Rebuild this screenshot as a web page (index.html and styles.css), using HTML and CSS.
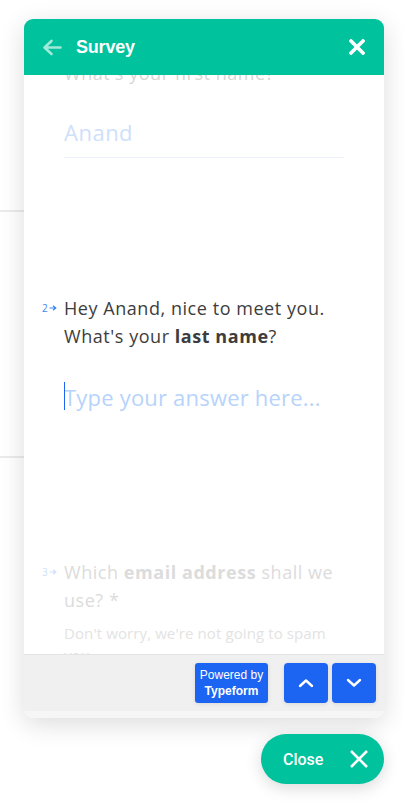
FILE: index.html
```html
<!DOCTYPE html>
<html>
<head>
<meta charset="utf-8">
<link rel="stylesheet" href="styles.css">
</head>
<body>
<div class="backdrop">
  <div class="rule"></div>
  <div class="rule second"></div>
</div>

<div class="widget">
  <header class="head">
    <svg class="back" width="20" height="17" viewBox="0 0 20 17"><path d="M18.5 8.5H3M9.5 2L2.5 8.5L9.5 15" fill="none" stroke="#a3e9d9" stroke-width="2.6" stroke-linecap="round" stroke-linejoin="round"/></svg>
    <span class="title">Survey</span>
    <svg class="x" width="16" height="16" viewBox="0 0 16 16"><path d="M2 2L14 14M14 2L2 14" fill="none" stroke="#fff" stroke-width="3.6" stroke-linecap="square"/></svg>
  </header>

  <div class="body">
    <div class="q q1">What's your first name?</div>
    <div class="answer">Anand</div>

    <div class="q q2">
      <span class="num">2<svg width="8" height="6" viewBox="0 0 8 6"><path d="M0.5 3H6.5M4 0.8L6.8 3L4 5.2" fill="none" stroke="currentColor" stroke-width="1.2"/></svg></span>
      Hey Anand, nice to meet you. What's your <b>last name</b>?
    </div>
    <div class="input"><span class="caret"></span>Type your answer here...</div>

    <div class="q q3">
      <span class="num">3<svg width="8" height="6" viewBox="0 0 8 6"><path d="M0.5 3H6.5M4 0.8L6.8 3L4 5.2" fill="none" stroke="currentColor" stroke-width="1.2"/></svg></span>
      Which <b>email address</b> shall we use? *
    </div>
    <div class="help">Don't worry, we're not going to spam you.</div>
  </div>

  <footer class="foot">
    <div class="powered"><span>Powered by</span><b>Typeform</b></div>
    <div class="navs">
      <div class="nav"><svg width="16" height="10" viewBox="0 0 16 10"><path d="M2 8L8 2.5L14 8" fill="none" stroke="#fff" stroke-width="2.4" stroke-linecap="round" stroke-linejoin="round"/></svg></div>
      <div class="nav"><svg width="16" height="10" viewBox="0 0 16 10"><path d="M2 2L8 7.5L14 2" fill="none" stroke="#fff" stroke-width="2.4" stroke-linecap="round" stroke-linejoin="round"/></svg></div>
    </div>
  </footer>
  <div class="strip"></div>
</div>

<div class="fab">
  <span>Close</span>
  <svg width="20" height="20" viewBox="0 0 20 20"><path d="M2 2L18 18M18 2L2 18" fill="none" stroke="#fff" stroke-width="2.6"/></svg>
</div>
</body>
</html>
```

FILE: styles.css
```css
html, body {
  margin: 0;
  padding: 0;
  background: #fff;
}
body {
  width: 404px;
  height: 804px;
  overflow: hidden;
  position: relative;
  font-family: "Open Sans", "Liberation Sans", sans-serif;
}
.backdrop {
  padding-top: 210px;
  width: 60px;
}
.rule {
  height: 2px;
  background: #ebebeb;
}
.rule.second {
  margin-top: 244px;
}
.widget {
  position: absolute;
  left: 24px;
  top: 19px;
  width: 360px;
  height: 699px;
  border-radius: 9px;
  overflow: hidden;
  background: #fff;
  box-shadow: 0 6px 26px rgba(0, 0, 0, 0.14);
  display: flex;
  flex-direction: column;
}
.head {
  height: 56px;
  flex: none;
  background: #00c29d;
  display: flex;
  align-items: center;
  padding: 0 19px 0 18px;
  position: relative;
  z-index: 1;
}
.back {
  display: block;
}
.title {
  font-family: "Liberation Sans", Arial, sans-serif;
  font-weight: 700;
  font-size: 18px;
  color: #fff;
  margin-left: 14px;
  flex: 1;
  letter-spacing: -0.2px;
}
.x {
  display: block;
}
.body {
  flex: 1;
  overflow: hidden;
  padding: 0 40px;
  position: relative;
}
.q {
  font-size: 18px;
  line-height: 28px;
  color: #3d3d3d;
  letter-spacing: 0.55px;
  position: relative;
}
.q b {
  font-weight: 700;
}
.q1 {
  margin-top: -16px;
  color: #d6d6d6;
}
.answer {
  margin-top: 29px;
  font-size: 22px;
  line-height: 32px;
  color: #cfe0fb;
  letter-spacing: 0.5px;
  padding-bottom: 9px;
  border-bottom: 1px solid #edf1fb;
}
.q2 {
  margin-top: 136px;
}
.num {
  position: absolute;
  left: -22px;
  top: 0;
  height: 28px;
  font-size: 10px;
  color: #3c86f0;
  display: flex;
  align-items: center;
  gap: 1px;
  letter-spacing: 0;
}
.q3 .num {
  color: #cfe0fb;
}
.input {
  margin-top: 31px;
  font-size: 22px;
  line-height: 32px;
  color: #b7d3fb;
  letter-spacing: 0.2px;
  position: relative;
}
.caret {
  position: absolute;
  left: 0;
  top: 1px;
  width: 1px;
  height: 28px;
  background: #1c64f2;
}
.q3 {
  margin-top: 145px;
  color: #dcdcdc;
}
.help {
  margin-top: 8px;
  font-size: 15px;
  line-height: 22px;
  color: #e3e3e3;
  letter-spacing: 0.1px;
}
.foot {
  flex: none;
  background: #f0f0f0;
  border-top: 1px solid #e4e4e4;
  display: flex;
  justify-content: flex-end;
  align-items: flex-start;
  padding: 8px 8px 0 0;
  box-sizing: border-box;
  height: 57px;
}
.powered {
  width: 73px;
  height: 40px;
  background: #1c64f2;
  border-radius: 3px;
  color: #fff;
  font-family: "Liberation Sans", Arial, sans-serif;
  font-size: 12px;
  line-height: 16px;
  display: flex;
  flex-direction: column;
  align-items: center;
  justify-content: center;
  box-shadow: 0 1px 4px rgba(0,0,0,0.1);
}
.navs {
  display: flex;
  gap: 4px;
  margin-left: 16px;
}
.nav {
  width: 44px;
  height: 40px;
  background: #1c64f2;
  border-radius: 4px;
  display: flex;
  align-items: center;
  justify-content: center;
  box-shadow: 0 1px 4px rgba(0,0,0,0.1);
}
.nav svg {
  display: block;
}
.strip {
  height: 7px;
  flex: none;
  background: #f6f6f6;
}
.fab {
  position: absolute;
  left: 261px;
  top: 734px;
  width: 123px;
  height: 50px;
  border-radius: 25px;
  background: #00c29d;
  box-shadow: 0 4px 16px rgba(0,0,0,0.15);
  display: flex;
  align-items: center;
  justify-content: space-between;
  padding: 0 15px 0 22px;
  box-sizing: border-box;
  color: #fff;
  font-family: Roboto, "Liberation Sans", Arial, sans-serif;
  font-size: 16px;
  font-weight: 500;
}
.fab svg {
  display: block;
}
```
